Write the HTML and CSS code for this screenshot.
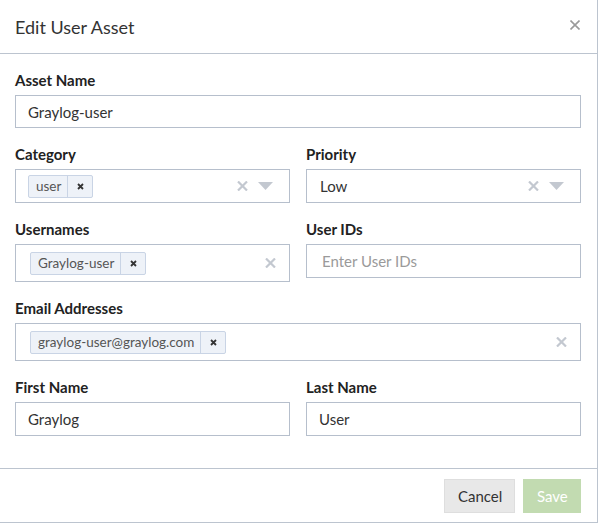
FILE: index.html
```html
<!DOCTYPE html>
<html>
<head>
<meta charset="utf-8">
<link rel="stylesheet" href="styles.css">
</head>
<body>
<div class="modal">
  <div class="modal-header">
    <h4 class="modal-title">Edit User Asset</h4>
    <button class="close" type="button" aria-label="Close">
      <svg width="10" height="10" viewBox="0 0 10 10"><path d="M0.5 0.5L9.5 9.5M9.5 0.5L0.5 9.5" stroke="#9a9a9a" stroke-width="1.6" fill="none"/></svg>
    </button>
  </div>
  <div class="modal-body">
    <div class="group">
      <label class="label">Asset Name</label>
      <input class="input input-first" type="text" value="Graylog-user">
    </div>
    <div class="row">
      <div class="group">
        <label class="label">Category</label>
        <div class="select">
          <div class="values">
            <span class="tag"><span class="tag-label">user</span><span class="tag-remove"><svg width="7" height="7" viewBox="0 0 7 7"><path d="M1 1L6 6M6 1L1 6" stroke="#333" stroke-width="1.8" fill="none"/></svg></span></span>
          </div>
          <span class="clear"><svg width="11" height="10" viewBox="0 0 11 10"><path d="M1 0.5L10 9.5M10 0.5L1 9.5" stroke="#c3c8d0" stroke-width="2.2" fill="none"/></svg></span>
          <span class="caret"><svg width="15" height="8" viewBox="0 0 15 8"><path d="M0 0H15L7.5 8Z" fill="#c3c8d0"/></svg></span>
        </div>
      </div>
      <div class="group">
        <label class="label">Priority</label>
        <div class="select">
          <div class="values"><span class="single">Low</span></div>
          <span class="clear"><svg width="11" height="10" viewBox="0 0 11 10"><path d="M1 0.5L10 9.5M10 0.5L1 9.5" stroke="#c3c8d0" stroke-width="2.2" fill="none"/></svg></span>
          <span class="caret"><svg width="15" height="8" viewBox="0 0 15 8"><path d="M0 0H15L7.5 8Z" fill="#c3c8d0"/></svg></span>
        </div>
      </div>
    </div>
    <div class="row">
      <div class="group">
        <label class="label">Usernames</label>
        <div class="select multi">
          <div class="values">
            <span class="tag"><span class="tag-label">Graylog-user</span><span class="tag-remove"><svg width="7" height="7" viewBox="0 0 7 7"><path d="M1 1L6 6M6 1L1 6" stroke="#333" stroke-width="1.8" fill="none"/></svg></span></span>
          </div>
          <span class="clear solo"><svg width="11" height="10" viewBox="0 0 11 10"><path d="M1 0.5L10 9.5M10 0.5L1 9.5" stroke="#c3c8d0" stroke-width="2.2" fill="none"/></svg></span>
        </div>
      </div>
      <div class="group">
        <label class="label">User IDs</label>
        <input class="input input-ids" type="text" placeholder="Enter User IDs">
      </div>
    </div>
    <div class="group">
      <label class="label">Email Addresses</label>
      <div class="select multi">
        <div class="values">
          <span class="tag"><span class="tag-label">graylog-user@graylog.com</span><span class="tag-remove"><svg width="7" height="7" viewBox="0 0 7 7"><path d="M1 1L6 6M6 1L1 6" stroke="#333" stroke-width="1.8" fill="none"/></svg></span></span>
        </div>
        <span class="clear solo"><svg width="11" height="10" viewBox="0 0 11 10"><path d="M1 0.5L10 9.5M10 0.5L1 9.5" stroke="#c3c8d0" stroke-width="2.2" fill="none"/></svg></span>
      </div>
    </div>
    <div class="row">
      <div class="group">
        <label class="label">First Name</label>
        <input class="input" type="text" value="Graylog">
      </div>
      <div class="group">
        <label class="label">Last Name</label>
        <input class="input" type="text" value="User">
      </div>
    </div>
  </div>
  <div class="modal-footer">
    <button class="btn btn-cancel" type="button">Cancel</button>
    <button class="btn btn-save" type="button" disabled>Save</button>
  </div>
</div>
</body>
</html>
```
FILE: styles.css
```css
* { box-sizing: border-box; }
body {
  margin: 0;
  background: #fff;
  font-family: Lato, "Liberation Sans", sans-serif;
  color: #1f1f1f;
}
.modal {
  width: 598px;
  height: 523px;
  border-right: 1px solid #bcc4cf;
  border-bottom: 1px solid #bcc4cf;
  background: #fff;
}
.modal-header {
  height: 54px;
  border-bottom: 1px solid #bcc4cf;
  display: flex;
  align-items: center;
  justify-content: space-between;
  padding: 0 17px 0 15px;
}
.modal-title {
  margin: 0;
  font-size: 18px;
  font-weight: 400;
  color: #333;
  line-height: 24px;
}
.close {
  border: 0;
  background: none;
  padding: 0;
  width: 10px;
  height: 10px;
  display: flex;
  margin-top: -4px;
}
.modal-body {
  padding: 16px 16px 16px 15px;
}
.group {
  margin-bottom: 16px;
}
.row {
  display: grid;
  grid-template-columns: 1fr 1fr;
  column-gap: 16px;
  align-items: start;
}
.label {
  display: block;
  font-size: 15px;
  font-weight: 700;
  line-height: 20px;
  margin-bottom: 5px;
  color: #222;
}
.input {
  display: block;
  width: 100%;
  height: 34px;
  border: 1px solid #b6bfcc;
  border-radius: 0;
  padding: 0 12px;
  font-family: inherit;
  font-size: 15px;
  color: #333;
  outline: none;
  background: #fff;
}
.input-first { height: 33px; }
.input-ids { padding-left: 15px; }
.input::placeholder { color: #9a9a9a; }
.select {
  display: flex;
  align-items: center;
  height: 34px;
  border: 1px solid #b6bfcc;
  padding: 0 16px 0 12px;
  background: #fff;
}
.select.multi {
  height: 38px;
  padding-left: 14px;
  padding-right: 13px;
}
.values {
  flex: 1;
  display: flex;
  align-items: center;
  min-width: 0;
}
.single {
  font-size: 15px;
  color: #333;
  padding-left: 1px;
}
.tag {
  display: inline-flex;
  height: 23px;
  border: 1px solid #c9d4e5;
  background: #eef2f8;
  border-radius: 2px;
  font-size: 13.5px;
  color: #555;
  line-height: 21px;
}
.tag-label {
  padding: 0 6px 0 7px;
}
.tag-remove {
  width: 25px;
  border-left: 1px solid #c9d4e5;
  display: flex;
  align-items: center;
  justify-content: center;
}
.clear {
  display: flex;
  margin-right: 10px;
}
.clear.solo { margin-right: 0; }
.caret { display: flex; }
.modal-footer {
  display: flex;
  justify-content: flex-end;
  gap: 8px;
  border-top: 1px solid #bcc4cf;
  padding: 10px 16px 9px 15px;
}
.btn {
  height: 34px;
  border: 1px solid #dedede;
  font-family: inherit;
  font-size: 15px;
  padding: 0 13px;
  border-radius: 0;
}
.btn-cancel {
  background: #e8e8e8;
  color: #333;
  width: 71px;
}
.btn-save {
  background: #c2dbb1;
  border-color: #c2dbb1;
  color: #fff;
  width: 58px;
}
```
